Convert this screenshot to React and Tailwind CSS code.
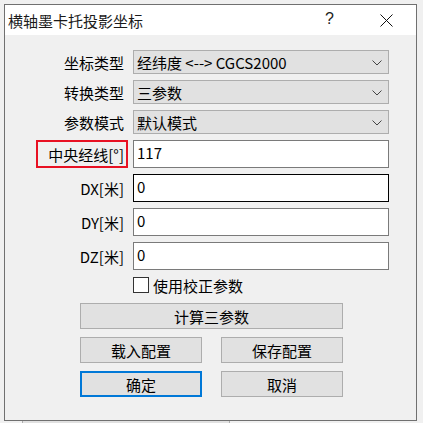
import React from "react";

const font = { fontFamily: '"Noto Sans CJK SC", "Noto Sans", sans-serif' };

function Chevron() {
  return (
    <svg width="10" height="6" viewBox="0 0 10 6" className="absolute right-[6px] top-[9px]">
      <path d="M0.5 0.5 L5 5 L9.5 0.5" fill="none" stroke="#444" strokeWidth="1" />
    </svg>
  );
}

function Row({ label, red, children, h }) {
  return (
    <div className={`flex ${h} ml-[31px]`}>
      <div
        className={`w-[92px] ${red ? "border-2 border-[#e81123]" : "border-2 border-transparent"} pr-[2px] flex items-center justify-end text-[15px] text-black leading-none whitespace-nowrap`}
      >
        {label}
      </div>
      <div className="ml-[5px] w-[256px] h-full">{children}</div>
    </div>
  );
}

function Combo({ text }) {
  return (
    <div className="relative h-full w-full bg-[#e1e1e1] border border-[#adadad] flex items-center pl-[3px] text-[15px] text-black leading-none">
      <span>{text}</span>
      <Chevron />
    </div>
  );
}

function Input({ text, focused }) {
  return (
    <div
      className={`h-full w-full bg-white border ${focused ? "border-black" : "border-[#7a7a7a]"} pl-[3px] pt-[4px] text-[15px] text-black leading-[16px]`}
    >
      {text}
    </div>
  );
}

function Btn({ children, w, primary }) {
  return (
    <div
      className={`${w} h-[26px] bg-[#e1e1e1] ${primary ? "border-2 border-[#0078d7]" : "border border-[#adadad]"} flex items-center justify-center text-[15px] text-black leading-none`}
    >
      {children}
    </div>
  );
}

export default function App() {
  return (
    <div className="w-[423px] h-[423px] bg-[#f0f0f0] overflow-hidden relative" style={font}>
      <div className="absolute left-[22px] top-[419px] w-[208px] h-[10px] bg-[#e1e1e1] border border-[#adadad]" />
      <div className="relative ml-[4px] mt-[4px] w-[413px] h-[417px] border border-[#707070] bg-[#f0f0f0] flex flex-col">
        <div className="h-[30px] bg-white flex items-center relative">
          <span className="ml-[3px] text-[15px] text-[#1a1a1a] leading-none">横轴墨卡托投影坐标</span>
          <span className="absolute left-[320px] top-[6px] text-[16px] text-[#222] leading-none" style={{ fontFamily: '"Liberation Sans", sans-serif' }}>?</span>
          <svg width="13" height="13" viewBox="0 0 13 13" className="absolute left-[375px] top-[9px]">
            <path d="M0.5 0.5 L12.5 12.5 M12.5 0.5 L0.5 12.5" stroke="#111" strokeWidth="1" fill="none" />
          </svg>
        </div>
        <div className="flex flex-col mt-[15px] gap-[6px]">
          <Row label="坐标类型" h="h-[24px]"><Combo text="经纬度 <--> CGCS2000" /></Row>
          <Row label="转换类型" h="h-[24px]"><Combo text="三参数" /></Row>
          <Row label="参数模式" h="h-[24px]"><Combo text="默认模式" /></Row>
          <Row label="中央经线[°]" red h="h-[28px]"><Input text="117" /></Row>
          <Row label="DX[米]" h="h-[28px]"><Input text="0" focused /></Row>
          <Row label="DY[米]" h="h-[28px]"><Input text="0" /></Row>
          <Row label="DZ[米]" h="h-[28px]"><Input text="0" /></Row>
        </div>
        <div className="flex items-center ml-[128px] mt-[7px] h-[16px]">
          <div className="w-[16px] h-[16px] bg-white border border-[#333]" />
          <span className="ml-[4px] text-[15px] text-black leading-none">使用校正参数</span>
        </div>
        <div className="ml-[75px] mt-[10px] flex flex-col gap-[8px]">
          <Btn w="w-[263px]">计算三参数</Btn>
          <div className="flex gap-[19px]">
            <Btn w="w-[122px]">载入配置</Btn>
            <Btn w="w-[122px]">保存配置</Btn>
          </div>
          <div className="flex gap-[19px]">
            <Btn w="w-[122px]" primary>确定</Btn>
            <Btn w="w-[122px]">取消</Btn>
          </div>
        </div>
      </div>
    </div>
  );
}
